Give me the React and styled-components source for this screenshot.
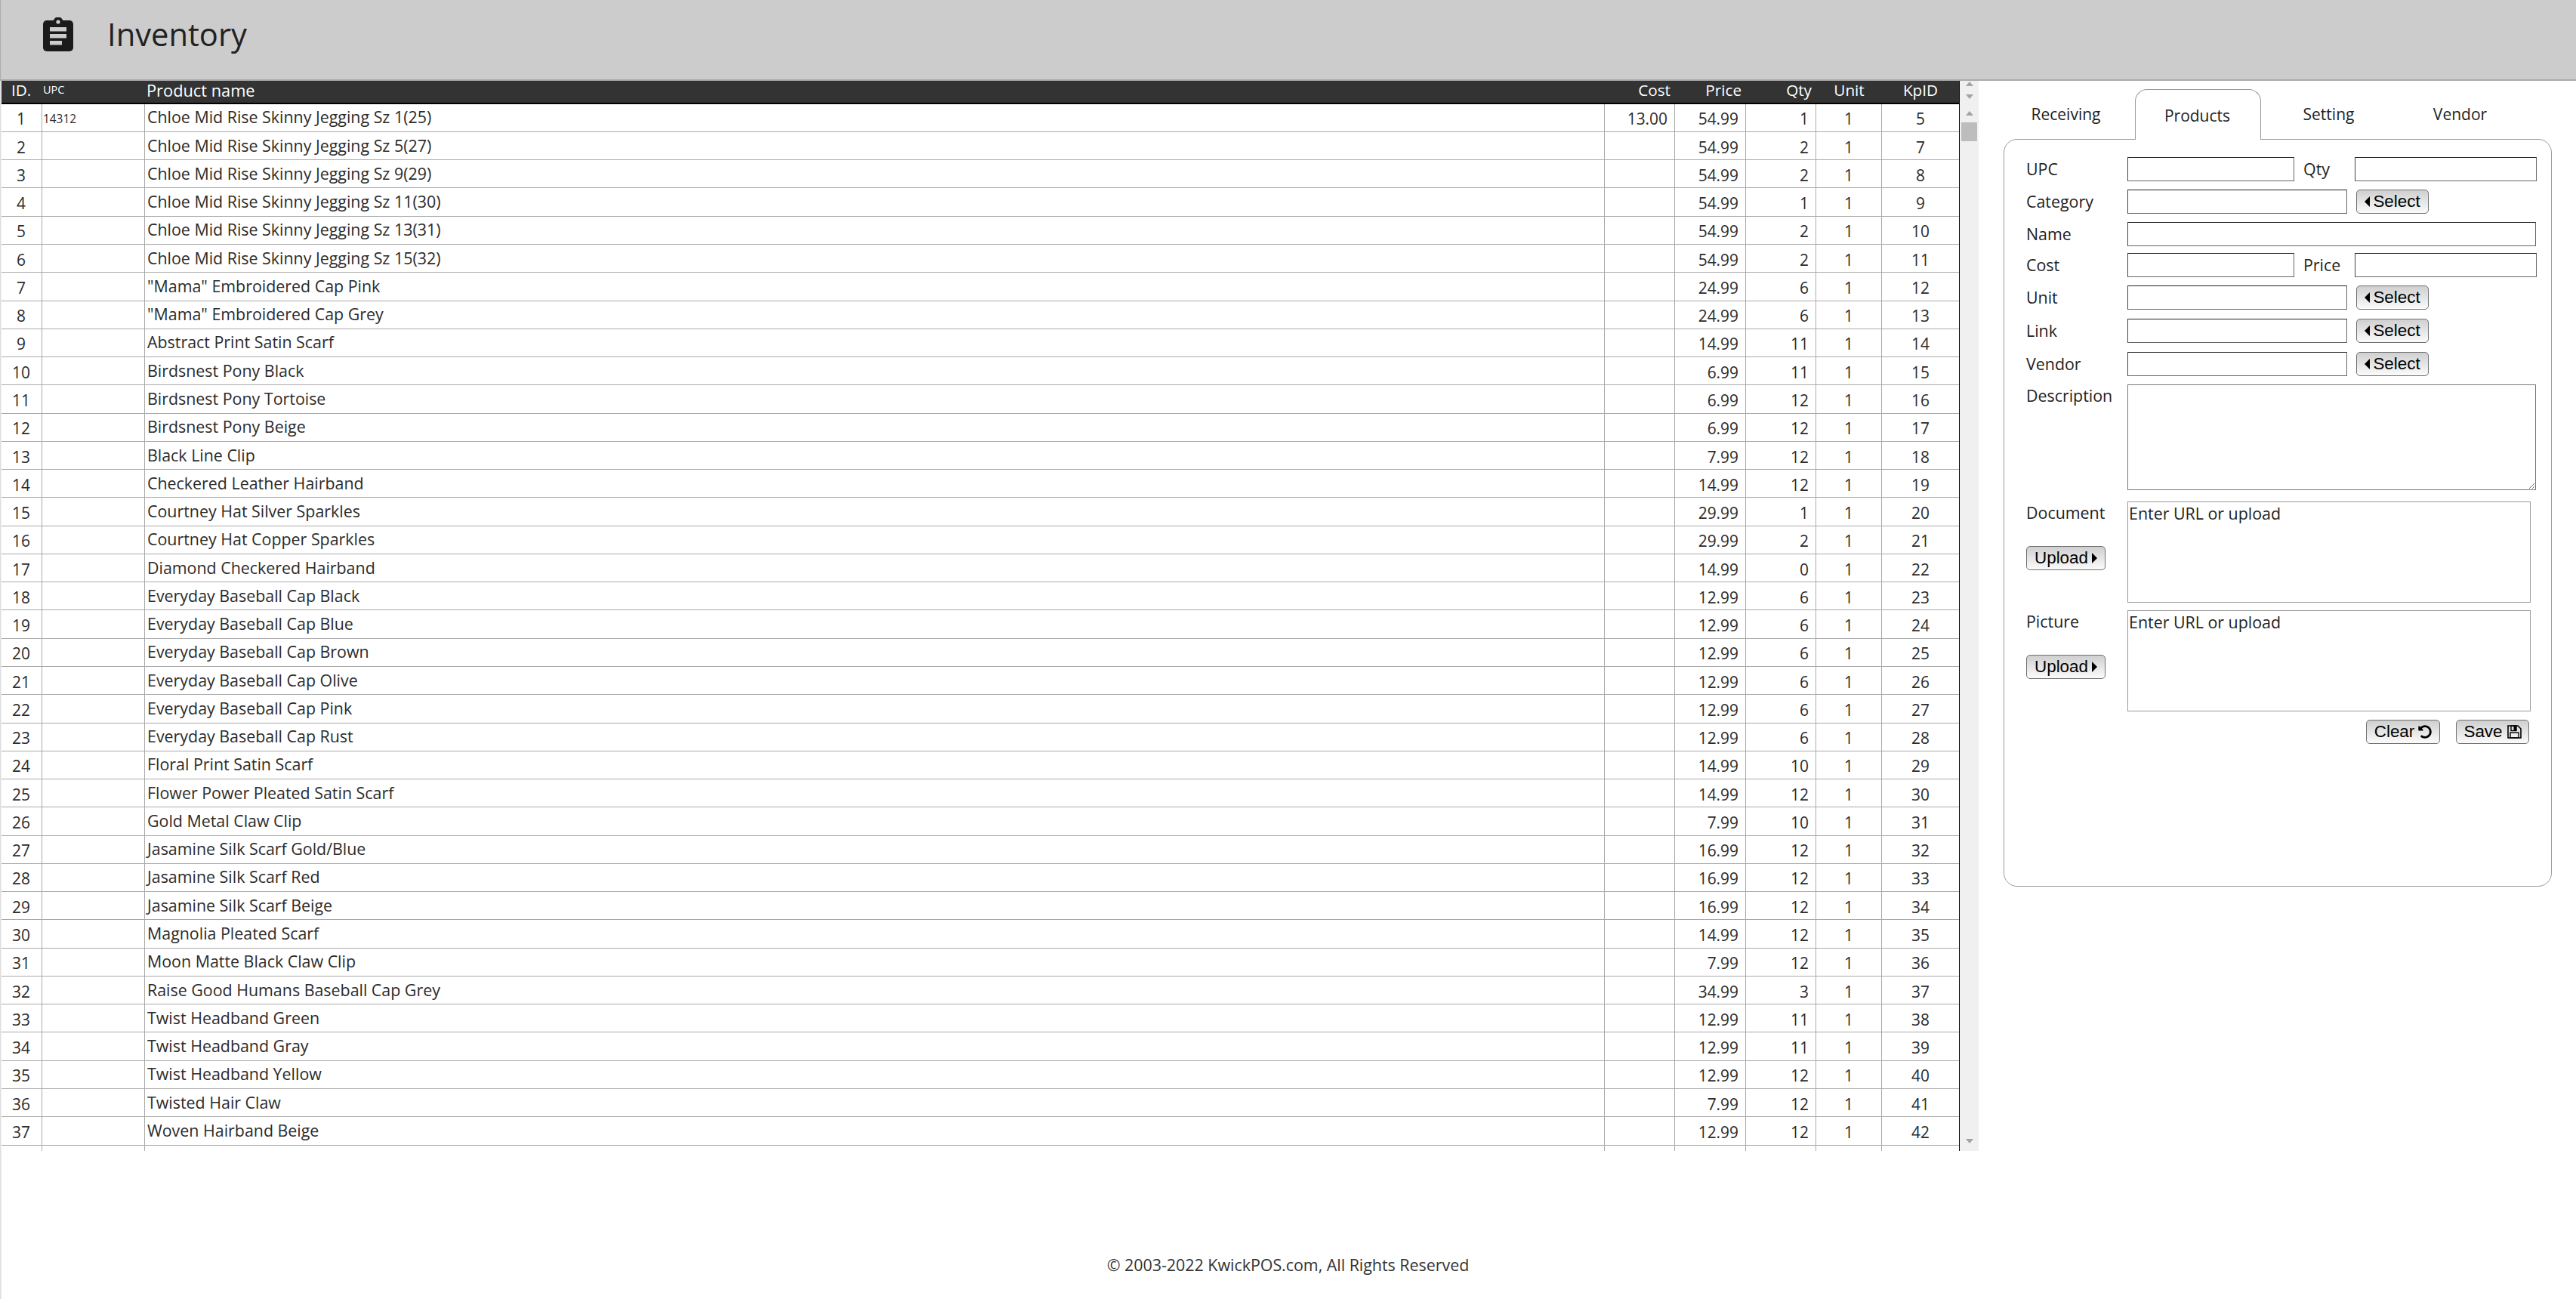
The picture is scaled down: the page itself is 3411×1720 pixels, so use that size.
import React from "react";
import styled, { createGlobalStyle } from "styled-components";
import { FaUndoAlt } from "react-icons/fa";

const products = [
  [1, "14312", "Chloe Mid Rise Skinny Jegging Sz 1(25)", "13.00", "54.99", 1, 5],
  [2, "", "Chloe Mid Rise Skinny Jegging Sz 5(27)", "", "54.99", 2, 7],
  [3, "", "Chloe Mid Rise Skinny Jegging Sz 9(29)", "", "54.99", 2, 8],
  [4, "", "Chloe Mid Rise Skinny Jegging Sz 11(30)", "", "54.99", 1, 9],
  [5, "", "Chloe Mid Rise Skinny Jegging Sz 13(31)", "", "54.99", 2, 10],
  [6, "", "Chloe Mid Rise Skinny Jegging Sz 15(32)", "", "54.99", 2, 11],
  [7, "", '"Mama" Embroidered Cap Pink', "", "24.99", 6, 12],
  [8, "", '"Mama" Embroidered Cap Grey', "", "24.99", 6, 13],
  [9, "", "Abstract Print Satin Scarf", "", "14.99", 11, 14],
  [10, "", "Birdsnest Pony Black", "", "6.99", 11, 15],
  [11, "", "Birdsnest Pony Tortoise", "", "6.99", 12, 16],
  [12, "", "Birdsnest Pony Beige", "", "6.99", 12, 17],
  [13, "", "Black Line Clip", "", "7.99", 12, 18],
  [14, "", "Checkered Leather Hairband", "", "14.99", 12, 19],
  [15, "", "Courtney Hat Silver Sparkles", "", "29.99", 1, 20],
  [16, "", "Courtney Hat Copper Sparkles", "", "29.99", 2, 21],
  [17, "", "Diamond Checkered Hairband", "", "14.99", 0, 22],
  [18, "", "Everyday Baseball Cap Black", "", "12.99", 6, 23],
  [19, "", "Everyday Baseball Cap Blue", "", "12.99", 6, 24],
  [20, "", "Everyday Baseball Cap Brown", "", "12.99", 6, 25],
  [21, "", "Everyday Baseball Cap Olive", "", "12.99", 6, 26],
  [22, "", "Everyday Baseball Cap Pink", "", "12.99", 6, 27],
  [23, "", "Everyday Baseball Cap Rust", "", "12.99", 6, 28],
  [24, "", "Floral Print Satin Scarf", "", "14.99", 10, 29],
  [25, "", "Flower Power Pleated Satin Scarf", "", "14.99", 12, 30],
  [26, "", "Gold Metal Claw Clip", "", "7.99", 10, 31],
  [27, "", "Jasamine Silk Scarf Gold/Blue", "", "16.99", 12, 32],
  [28, "", "Jasamine Silk Scarf Red", "", "16.99", 12, 33],
  [29, "", "Jasamine Silk Scarf Beige", "", "16.99", 12, 34],
  [30, "", "Magnolia Pleated Scarf", "", "14.99", 12, 35],
  [31, "", "Moon Matte Black Claw Clip", "", "7.99", 12, 36],
  [32, "", "Raise Good Humans Baseball Cap Grey", "", "34.99", 3, 37],
  [33, "", "Twist Headband Green", "", "12.99", 11, 38],
  [34, "", "Twist Headband Gray", "", "12.99", 11, 39],
  [35, "", "Twist Headband Yellow", "", "12.99", 12, 40],
  [36, "", "Twisted Hair Claw", "", "7.99", 12, 41],
  [37, "", "Woven Hairband Beige", "", "12.99", 12, 42],
];

const GlobalStyle = createGlobalStyle`
  html, body {
    margin: 0;
    padding: 0;
    background: #fff;
    overflow: hidden;
  }
  * {
    box-sizing: border-box;
  }
`;

const Page = styled.div`
  width: 3411px;
  height: 1720px;
  display: flex;
  flex-direction: column;
  font-family: "Open Sans", sans-serif;
  color: #222;
  background: linear-gradient(to right, #d8d8d8, #f4f4f4 2px, #fff 3px);
`;
const Header = styled.header`
  height: 107px;
  flex: none;
  display: flex;
  align-items: center;
  padding: 0 0 14px 57px;
  background: #cccccc;
  border-bottom: 2px solid #aaa;
  box-shadow: inset 2px 0 1px -1px #aaa;
`;
const Title = styled.h1`
  margin: 0 0 0 45px;
  font-size: 41.7px;
  font-weight: 400;
  line-height: 1.2;
  color: #222;
`;
const Main = styled.main`
  display: flex;
  height: 1417px;
  flex: none;
`;
const TableArea = styled.section`
  display: flex;
  flex: none;
  padding-left: 2px;
  height: 100%;
`;
const Table = styled.div`
  width: 2593px;
  height: 100%;
  background: #fff;
  border-right: 1px solid #000;
`;
const columns = "54px 136px 1933px 93px 94px 93px 87px 102px";
const HeadRow = styled.div`
  display: grid;
  grid-template-columns: ${columns};
  height: 30.7px;
  background: #333;
  border-bottom: 2px solid #000;
  color: #fff;
`;
const HeadCell = styled.div`
  display: flex;
  align-items: center;
  padding: ${(p) => p.$pad || "0 6px 3px"};
  justify-content: ${(p) => p.$justify || "flex-end"};
  font-size: ${(p) => p.$size || "20.7px"};
  line-height: 1;
  white-space: nowrap;
`;
const Row = styled.div`
  display: grid;
  grid-template-columns: ${columns};
  height: 37.28px;
  border-bottom: 1px solid #aaa;
`;
const StubRow = styled(Row)`
  height: 7px;
  border-bottom: none;
`;
const Cell = styled.div`
  display: flex;
  align-items: center;
  padding: ${(p) => p.$pad || "3px 9px 0"};
  justify-content: ${(p) => p.$justify || "flex-end"};
  font-size: ${(p) => p.$size || "20.9px"};
  border-right: 1px solid #aaa;
  white-space: nowrap;
  color: #2b2b2b;
  &:last-child {
    border-right: none;
  }
`;
const Scrollbar = styled.div`
  width: 25px;
  height: 100%;
  display: flex;
  flex-direction: column;
  align-items: center;
  background: #f0f0f0;
  padding-bottom: 10px;
`;
const Arrow = styled.span`
  width: 0;
  height: 0;
  flex: none;
  margin-top: ${(p) => p.$top};
  border-left: 5.5px solid transparent;
  border-right: 5.5px solid transparent;
  ${(p) =>
    p.$down ? "border-top: 6px solid #a3a3a3;" : "border-bottom: 6px solid #a3a3a3;"}
`;
const Thumb = styled.div`
  width: 21px;
  height: 25px;
  flex: none;
  margin-top: 9px;
  background: #bdbdbd;
`;
const Side = styled.aside`
  padding: 11px 0 0 33px;
`;
const Tabs = styled.nav`
  display: flex;
  gap: 7px;
  height: 67px;
  margin-bottom: -1px;
  position: relative;
  z-index: 1;
`;
const Tab = styled.div`
  width: 167px;
  display: flex;
  align-items: center;
  justify-content: center;
  font-size: 21px;
  padding: ${(p) => (p.$active ? "1px 2px 0 0" : "0 2px 1px 0")};
  color: #222;
  border-radius: 16px 16px 0 0;
  ${(p) =>
    p.$active &&
    "background: #fff; border: 1px solid #999; border-bottom: none;"}
`;
const Panel = styled.form`
  width: 726px;
  height: 990px;
  border: 1px solid #999;
  border-radius: 18px;
  padding: 23px 0 0 29px;
`;
const Field = styled.div`
  display: flex;
  align-items: center;
  width: 675px;
  height: 32px;
  margin-top: ${(p) => p.$top || "0"};
`;
const Label = styled.label`
  flex: none;
  width: ${(p) => p.$width || "134px"};
  padding-left: ${(p) => p.$indent || "0"};
  padding-bottom: 1px;
  font-size: 21.4px;
  color: #222;
`;
const Input = styled.input`
  flex: none;
  display: block;
  width: ${(p) => p.$width || "291px"};
  height: 32px;
  padding: 1px 2px;
  background: #fff;
  border: 1px solid #666;
  border-top-color: #222;
  border-left-color: #444;
  border-radius: 0;
  outline: none;
`;
const Button = styled.button`
  display: inline-flex;
  align-items: center;
  justify-content: center;
  gap: ${(p) => p.$gap || "4px"};
  flex: none;
  width: ${(p) => p.$width};
  height: 32px;
  margin-left: ${(p) => p.$left || "0"};
  padding: 0;
  font-family: "Liberation Sans", Arial, sans-serif;
  font-size: 22.4px;
  color: #000;
  background: linear-gradient(#cfcfcf, #fbfbfb);
  border: 1px solid #707070;
  border-radius: 5px;
`;
const Caret = styled.svg`
  width: 7px;
  height: 14px;
  fill: #000;
  flex: none;
`;
const Description = styled.div`
  display: flex;
  align-items: flex-start;
  width: 675px;
  margin-top: 11px;
`;
const TextArea = styled.textarea`
  display: block;
  width: 541px;
  height: 140px;
  margin: 0;
  background: #fff;
  border: 1.5px solid #777;
  border-radius: 0;
  outline: none;
  resize: both;
`;
const UploadBlock = styled.div`
  display: flex;
  width: 675px;
  height: 134px;
  margin-top: ${(p) => p.$top};
`;
const UploadSide = styled.div`
  width: 134px;
  flex: none;
  display: flex;
  flex-direction: column;
  align-items: flex-start;
  gap: 29px;
`;
const UploadBox = styled.div`
  width: 534px;
  height: 100%;
  padding: 0 1px;
  border: 1px solid #999;
  font-size: 21.4px;
  line-height: 30px;
  color: #222;
`;
const Actions = styled.div`
  display: flex;
  justify-content: flex-end;
  gap: 21px;
  width: 666px;
  margin-top: 11px;
`;
const Footer = styled.footer`
  margin-top: 137px;
  text-align: center;
  font-size: 21.4px;
  line-height: 28px;
  color: #333;
`;

function ClipboardIcon() {
  return (
    <svg width="40" height="46" viewBox="0 0 40 46">
      <circle cx="20" cy="6" r="6.5" fill="#1b1b1b" />
      <rect x="0" y="4" width="40" height="41" rx="5" fill="#1b1b1b" />
      <circle cx="20" cy="6" r="2.6" fill="#ccc" />
      <rect x="9" y="13" width="22" height="5.5" fill="#ccc" />
      <rect x="9" y="22" width="22" height="5.5" fill="#ccc" />
      <rect x="9" y="31" width="16" height="5.5" fill="#ccc" />
    </svg>
  );
}

function SaveIcon() {
  return (
    <svg width="19" height="18" viewBox="0 0 19 18">
      <path
        d="M1 1h13l4 4v12H1z"
        fill="none"
        stroke="#000"
        strokeWidth="1.6"
      />
      <rect x="5" y="1" width="7" height="6.5" fill="none" stroke="#000" strokeWidth="1.4" />
      <rect x="8.5" y="1" width="3.5" height="6" fill="#000" />
      <rect x="4" y="10" width="11" height="7" fill="none" stroke="#000" strokeWidth="1.4" />
    </svg>
  );
}

function SelectButton() {
  return (
    <Button type="button" $width="96px" $left="12px" $gap="4px">
      <Caret viewBox="0 0 7 14">
        <polygon points="7,0 7,14 0,7" />
      </Caret>
      Select
    </Button>
  );
}

function UploadButton() {
  return (
    <Button type="button" $width="105px" $gap="5px">
      Upload
      <Caret viewBox="0 0 7 14">
        <polygon points="0,0 0,14 7,7" />
      </Caret>
    </Button>
  );
}

export default function App() {
  return (
    <Page>
      <GlobalStyle />
      <Header>
        <ClipboardIcon />
        <Title>Inventory</Title>
      </Header>
      <Main>
        <TableArea>
          <Table>
            <HeadRow>
              <HeadCell $justify="center" $pad="0 2px 3px 0">ID.</HeadCell>
              <HeadCell $justify="flex-start" $pad="0 0 4px 1px" $size="14.5px">UPC</HeadCell>
              <HeadCell $justify="flex-start" $pad="0 0 2px 2px" $size="21.8px">Product name</HeadCell>
              <HeadCell>Cost</HeadCell>
              <HeadCell>Price</HeadCell>
              <HeadCell>Qty</HeadCell>
              <HeadCell $justify="center" $pad="0 0 3px">Unit</HeadCell>
              <HeadCell $justify="center" $pad="0 0 3px">KpID</HeadCell>
            </HeadRow>
            {products.map((p) => (
              <Row key={p[0]}>
                <Cell $justify="center" $pad="3px 1px 0 0">{p[0]}</Cell>
                <Cell $justify="flex-start" $pad="3px 0 0 1px" $size="15.4px">{p[1]}</Cell>
                <Cell $justify="flex-start" $pad="0 0 2px 3px" $size="21.4px">{p[2]}</Cell>
                <Cell>{p[3]}</Cell>
                <Cell>{p[4]}</Cell>
                <Cell>{p[5]}</Cell>
                <Cell $justify="center">1</Cell>
                <Cell $justify="center">{p[6]}</Cell>
              </Row>
            ))}
            <StubRow>
              <Cell $pad="0" />
              <Cell $pad="0" />
              <Cell $pad="0" />
              <Cell $pad="0" />
              <Cell $pad="0" />
              <Cell $pad="0" />
              <Cell $pad="0" />
              <Cell $pad="0" />
            </StubRow>
          </Table>
          <Scrollbar>
            <Arrow $top="1px" />
            <Arrow $top="11px" $down />
            <Arrow $top="16px" />
            <Thumb />
            <Arrow $top="auto" $down />
          </Scrollbar>
        </TableArea>
        <Side>
          <Tabs>
            <Tab>Receiving</Tab>
            <Tab $active>Products</Tab>
            <Tab>Setting</Tab>
            <Tab>Vendor</Tab>
          </Tabs>
          <Panel>
            <Field>
              <Label>UPC</Label>
              <Input $width="221px" />
              <Label $width="80px" $indent="12px">Qty</Label>
              <Input $width="241px" />
            </Field>
            <Field $top="11px">
              <Label>Category</Label>
              <Input />
              <SelectButton />
            </Field>
            <Field $top="11px">
              <Label>Name</Label>
              <Input $width="541px" />
            </Field>
            <Field $top="9px">
              <Label>Cost</Label>
              <Input $width="221px" />
              <Label $width="80px" $indent="12px">Price</Label>
              <Input $width="241px" />
            </Field>
            <Field $top="11px">
              <Label>Unit</Label>
              <Input />
              <SelectButton />
            </Field>
            <Field $top="12px">
              <Label>Link</Label>
              <Input />
              <SelectButton />
            </Field>
            <Field $top="12px">
              <Label>Vendor</Label>
              <Input />
              <SelectButton />
            </Field>
            <Description>
              <Label>Description</Label>
              <TextArea />
            </Description>
            <UploadBlock $top="15px">
              <UploadSide>
                <Label>Document</Label>
                <UploadButton />
              </UploadSide>
              <UploadBox>Enter URL or upload</UploadBox>
            </UploadBlock>
            <UploadBlock $top="10px">
              <UploadSide>
                <Label>Picture</Label>
                <UploadButton />
              </UploadSide>
              <UploadBox>Enter URL or upload</UploadBox>
            </UploadBlock>
            <Actions>
              <Button type="button" $width="98px" $gap="5px">
                Clear
                <FaUndoAlt size={18} />
              </Button>
              <Button type="button" $width="97px" $gap="6px">
                Save
                <SaveIcon />
              </Button>
            </Actions>
          </Panel>
        </Side>
      </Main>
      <Footer>© 2003-2022 KwickPOS.com, All Rights Reserved</Footer>
    </Page>
  );
}
